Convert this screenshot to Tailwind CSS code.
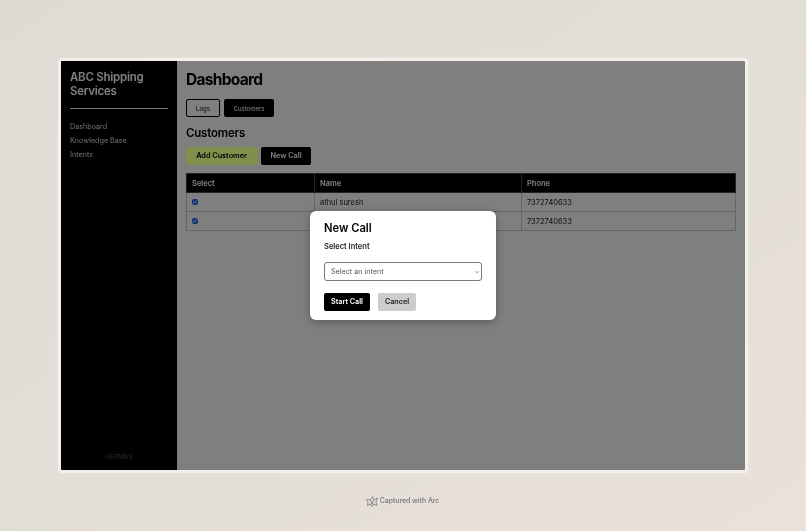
<!DOCTYPE html>
<html lang="en">
<head>
    <meta charset="UTF-8">
    <title>ABC Shipping Services</title>
    <script src="https://cdn.jsdelivr.net/npm/@tailwindcss/browser@4"></script>
</head>
<body class="h-[531px] w-[806px] overflow-hidden bg-gradient-to-br from-[#dedad4] to-[#e9e1db] font-['Inter','Liberation_Sans',sans-serif] antialiased">

    <div class="flex h-full flex-col items-center pt-[58px] will-change-transform">
        <!-- Window -->
        <div class="relative h-[415px] w-[690px] overflow-hidden rounded-[4px] border-[3px] border-[#f3f0ec] bg-white shadow-[0_0_6px_rgba(255,255,255,0.25)]">
            <div class="flex h-full">
                <!-- Sidebar -->
                <aside class="flex w-[116px] shrink-0 flex-col bg-black px-[9px] pt-[9px] text-white">
                    <h2 class="border-b border-[#f5f5dc] pb-[10px] text-[11.5px] leading-[14px] font-semibold tracking-[-0.25px]">ABC Shipping Services</h2>
                    <nav class="mt-[11px] flex flex-col text-[7.2px] leading-[14px] text-[#dddddd]">
                        <a>Dashboard</a>
                        <a>Knowledge Base</a>
                        <a>Intents</a>
                    </nav>
                    <div class="mt-auto pb-[8px] text-center text-[6.8px] leading-[10px] text-[#555555]">HERMES</div>
                </aside>

                <!-- Main -->
                <main class="min-w-0 flex-1 px-[9px] pt-[9px]">
                    <h1 class="text-[15.5px] leading-[20px] font-bold tracking-[-0.7px] text-black">Dashboard</h1>
                    <div class="mt-[9px] flex gap-[4px] text-[6px]">
                        <button class="h-[18px] w-[34px] rounded-[2px] border border-black bg-white pt-[1px] text-black">Logs</button>
                        <button class="h-[18px] w-[50px] rounded-[2px] bg-black pt-[1px] text-white">Customers</button>
                    </div>
                    <h2 class="mt-[9px] text-[11.5px] leading-[14px] font-semibold tracking-[-0.2px] text-black">Customers</h2>
                    <div class="mt-[7px] flex gap-[4px] text-[7.3px] font-semibold">
                        <button class="relative z-10 h-[18px] w-[71px] rounded-[2px] bg-[#7f8f4e] text-black">Add Customer</button>
                        <button class="h-[18px] w-[50px] rounded-[2px] bg-black text-white">New Call</button>
                    </div>
                    <table class="mt-[8px] w-[550px] table-fixed border-collapse text-left text-[7.5px] text-[#222222]">
                        <thead>
                            <tr class="h-[19px] bg-black text-white">
                                <th class="w-[128px] border border-[#444444] px-[5px] pt-[1px] font-semibold">Select</th>
                                <th class="w-[207px] border border-[#444444] px-[5px] pt-[1px] font-semibold">Name</th>
                                <th class="border border-[#444444] px-[5px] pt-[1px] font-semibold">Phone</th>
                            </tr>
                        </thead>
                        <tbody>
                            <tr class="h-[19px]">
                                <td class="border border-[#cccccc] px-[5px]"><input type="checkbox" checked class="block h-[6px] w-[6px] accent-[#2563eb]"></td>
                                <td class="border border-[#cccccc] px-[5px] pt-[1px]">athul suresh</td>
                                <td class="border border-[#cccccc] px-[5px] pt-[1px]">7372740633</td>
                            </tr>
                            <tr class="h-[19px]">
                                <td class="border border-[#cccccc] px-[5px]"><input type="checkbox" checked class="block h-[6px] w-[6px] accent-[#2563eb]"></td>
                                <td class="border border-[#cccccc] px-[5px] pt-[1px]">athul suresh</td>
                                <td class="border border-[#cccccc] px-[5px] pt-[1px]">7372740633</td>
                            </tr>
                        </tbody>
                    </table>
                </main>
            </div>

            <!-- Modal overlay -->
            <div class="absolute inset-0 flex items-start justify-center bg-black/50 pt-[150px]">
                <div class="h-[109px] w-[186px] rounded-[6px] bg-white px-[14px] pt-[10px] shadow-[0_2px_8px_rgba(0,0,0,0.3)]">
                    <h3 class="text-[11.2px] leading-[15px] font-semibold text-black">New Call</h3>
                    <div class="mt-[6px] text-[7.5px] leading-[10px] font-semibold text-[#222222]">Select Intent</div>
                    <div class="relative mt-[10px] flex h-[19px] w-[158px] items-center rounded-[3px] border border-[#777777] pt-[1px] pl-[6px] text-[7.2px] text-[#555555]">
                        Select an intent
                        <svg class="absolute right-[1px] h-[6px] w-[6px]" viewBox="0 0 10 10" fill="none" stroke="#777777" stroke-width="1.2"><path d="M2 3.5 5 6.5 8 3.5"/></svg>
                    </div>
                    <div class="mt-[12px] flex gap-[8px] text-[7.2px] font-semibold">
                        <button class="h-[18px] w-[46px] rounded-[2px] bg-black text-white">Start Call</button>
                        <button class="h-[18px] w-[38px] rounded-[2px] bg-[#cccccc] text-[#222222]">Cancel</button>
                    </div>
                </div>
            </div>
        </div>

        <!-- Footer -->
        <div class="mt-[22px] ml-[-1px] flex items-center gap-[2px] pt-[1px] text-[6.9px] font-medium text-[#777572]">
            <svg class="h-[11px] w-[12px]" viewBox="0 0 24 22" fill="none" stroke="#777572" stroke-width="1.5" stroke-linejoin="round"><path d="M13 1 16 8 23 4 20 12 22 19 16 17 12 21 9 16 3 19 4 12 1 7 9 8Z"/><path d="M9 8 12 15 16 8M12 15 9 16M12 15 16 17"/></svg>
            <span>Captured with Arc</span>
        </div>
    </div>

</body>
</html>
